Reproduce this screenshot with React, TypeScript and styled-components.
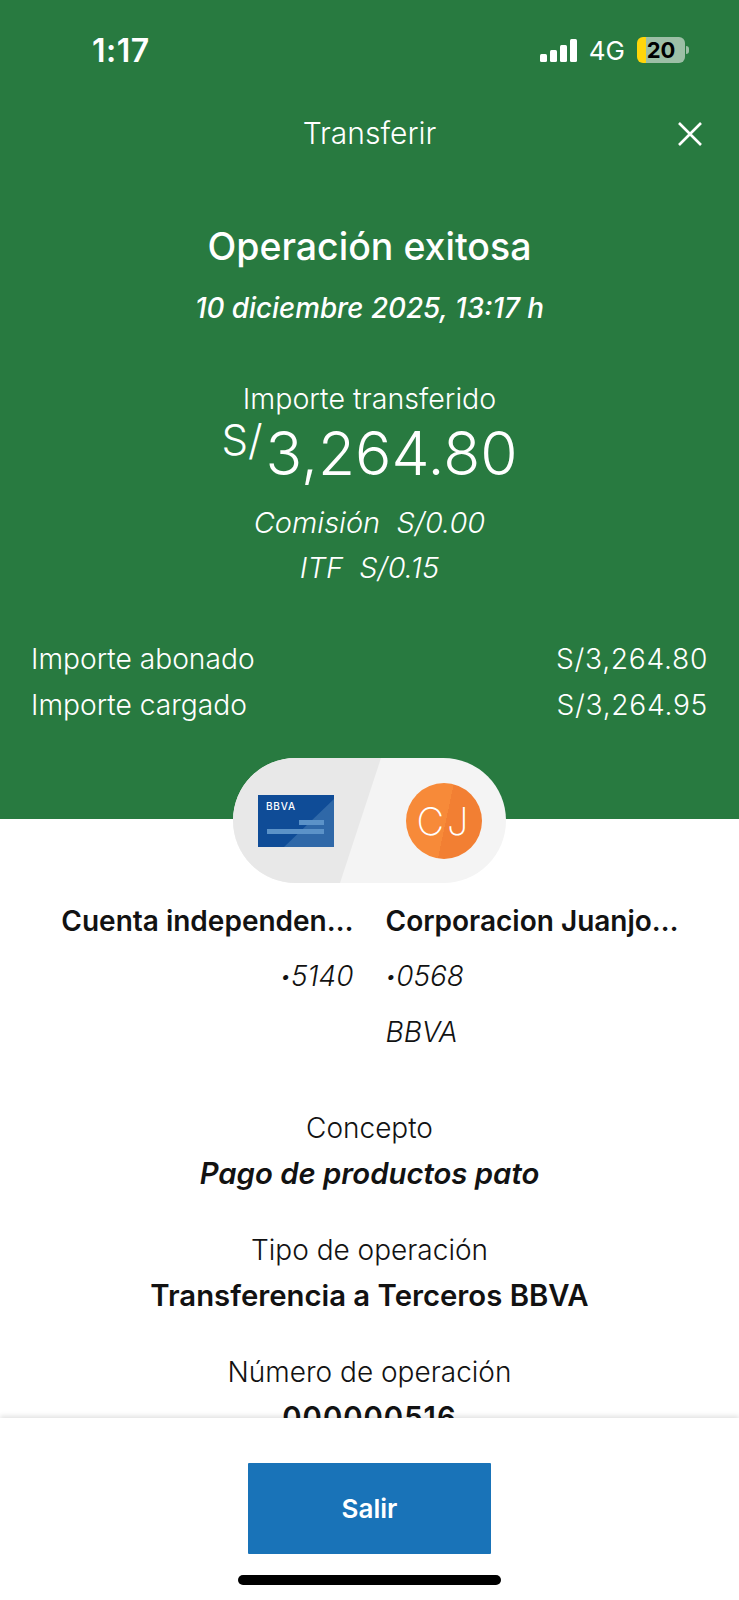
import styled, { createGlobalStyle } from "styled-components";

const GlobalStyle = createGlobalStyle`
  html, body {
    margin: 0;
    padding: 0;
    background: #fff;
  }
  * {
    box-sizing: border-box;
  }
`;

const SIGNAL_BARS = [8, 12, 17, 23];

const App = () => {
  return (
    <Screen>
      <GlobalStyle />
      <Scroller>
        <Hero>
          <StatusBar>
            <Clock>1:17</Clock>
            <StatusIcons>
              <Signal>
                {SIGNAL_BARS.map((h) => (
                  <SignalBar key={h} style={{ height: h }} />
                ))}
              </Signal>
              <Network>4G</Network>
              <Battery>
                <BatteryLevel>20</BatteryLevel>
                <BatteryTip />
              </Battery>
            </StatusIcons>
          </StatusBar>

          <NavBar>
            <NavTitle>Transferir</NavTitle>
            <CloseButton>
              <svg width="26" height="26" viewBox="0 0 26 26" fill="none">
                <path d="M2 2L24 24M24 2L2 24" stroke="#fff" strokeWidth="2.6" />
              </svg>
            </CloseButton>
          </NavBar>

          <Heading>Operación exitosa</Heading>
          <DateLine>10 diciembre 2025, 13:17 h</DateLine>

          <AmountLabel>Importe transferido</AmountLabel>
          <Amount>
            <Currency>S/</Currency>3,264.80
          </Amount>
          <Fee>Comisión&nbsp; S/0.00</Fee>
          <Fee $second>ITF&nbsp; S/0.15</Fee>

          <Totals>
            <TotalRow>
              <span>Importe abonado</span>
              <TotalValue>S/3,264.80</TotalValue>
            </TotalRow>
            <TotalRow>
              <span>Importe cargado</span>
              <TotalValue>S/3,264.95</TotalValue>
            </TotalRow>
          </Totals>
        </Hero>

        <Pill>
          <PillSide>
            <svg width="76" height="52" viewBox="0 0 76 52">
              <rect width="76" height="52" fill="#0f4c97" />
              <path d="M26 52L76 4V52Z" fill="#2f68a8" />
              <rect x="41" y="25" width="25" height="5" fill="#5b92c8" />
              <rect x="9" y="34" width="57" height="5" fill="#5b92c8" />
              <text x="8" y="15" fill="#fff" fontSize="10" fontWeight="500" fontFamily="Inter, sans-serif" letterSpacing="0.8">
                BBVA
              </text>
            </svg>
          </PillSide>
          <PillSide>
            <Avatar>CJ</Avatar>
          </PillSide>
        </Pill>

        <Accounts>
          <Account $align="right">
            <AccountName>Cuenta independen…</AccountName>
            <AccountLine>
              <Bullet>•</Bullet>5140
            </AccountLine>
          </Account>
          <Account $align="left">
            <AccountName>Corporacion Juanjo…</AccountName>
            <AccountLine>
              <Bullet>•</Bullet>0568
            </AccountLine>
            <AccountLine>BBVA</AccountLine>
          </Account>
        </Accounts>

        <Details>
          <DetailLabel>Concepto</DetailLabel>
          <DetailValue $italic>Pago de productos pato</DetailValue>
          <DetailLabel>Tipo de operación</DetailLabel>
          <DetailValue>Transferencia a Terceros BBVA</DetailValue>
          <DetailLabel>Número de operación</DetailLabel>
          <DetailValue $spaced>000000516</DetailValue>
        </Details>
      </Scroller>

      <Footer>
        <ExitButton>Salir</ExitButton>
        <HomeBar />
      </Footer>
    </Screen>
  );
};

export default App;

const Screen = styled.div`
  width: 739px;
  height: 1600px;
  display: flex;
  flex-direction: column;
  overflow: hidden;
  background: #fff;
  color: #121212;
  font-family: "Inter", "Liberation Sans", sans-serif;
  font-weight: 300;
`;

const Scroller = styled.div`
  flex: 1;
  min-height: 0;
  overflow: hidden;
`;

const Hero = styled.div`
  height: 819px;
  background: #287a40;
  color: #fff;
  padding-top: 30px;
  text-align: center;
`;

const StatusBar = styled.div`
  height: 40px;
  padding: 0 50px 0 92px;
  display: flex;
  align-items: center;
  justify-content: space-between;
`;

const Clock = styled.div`
  font-size: 32px;
  font-weight: 600;
  letter-spacing: 0.5px;
`;

const StatusIcons = styled.div`
  display: flex;
  align-items: center;
`;

const Signal = styled.div`
  display: flex;
  align-items: flex-end;
  gap: 3px;
  height: 23px;
`;

const SignalBar = styled.div`
  width: 7px;
  background: #fff;
  border-radius: 1.5px;
`;

const Network = styled.div`
  margin-left: 12px;
  font-size: 26px;
  font-weight: 400;
`;

const Battery = styled.div`
  display: flex;
  align-items: center;
  margin-left: 12px;
`;

const BatteryLevel = styled.div`
  width: 48px;
  height: 26px;
  border-radius: 6px;
  background: linear-gradient(90deg, #ffd60a 0 9px, #9dbfa6 9px);
  color: #000;
  font-size: 22px;
  font-weight: 700;
  line-height: 26px;
  text-align: center;
`;

const BatteryTip = styled.div`
  width: 3px;
  height: 8px;
  margin-left: 1px;
  border-radius: 0 3px 3px 0;
  background: #9dbfa6;
`;

const NavBar = styled.div`
  position: relative;
  margin-top: 43px;
  height: 40px;
  display: flex;
  align-items: center;
  justify-content: center;
`;

const NavTitle = styled.div`
  font-size: 30px;
`;

const CloseButton = styled.div`
  position: absolute;
  right: 36px;
  top: 8px;
  display: flex;
`;

const Heading = styled.h1`
  margin: 71px 0 0;
  font-size: 37.5px;
  font-weight: 500;
  line-height: 46px;
`;

const DateLine = styled.div`
  margin-top: 22px;
  font-size: 27.8px;
  font-weight: 500;
  font-style: italic;
  line-height: 32px;
`;

const AmountLabel = styled.div`
  margin-top: 58px;
  font-size: 28.6px;
  line-height: 34px;
`;

const Amount = styled.div`
  margin-top: 1px;
  font-size: 60.5px;
  line-height: 72px;
  position: relative;
`;

const Currency = styled.span`
  font-size: 42px;
  vertical-align: 20px;
  line-height: 0;
  margin-right: 3px;
`;

const Fee = styled.div<{ $second?: boolean }>`
  margin-top: ${(p) => (p.$second ? "11px" : "17px")};
  font-size: 29px;
  font-style: italic;
  line-height: 34px;
`;

const Totals = styled.div`
  margin-top: 57px;
  padding: 0 31px;
  display: flex;
  flex-direction: column;
  gap: 11px;
`;

const TotalRow = styled.div`
  display: flex;
  justify-content: space-between;
  font-size: 28.2px;
  line-height: 35px;
`;

const TotalValue = styled.span`
  letter-spacing: 0.7px;
`;

const Pill = styled.div`
  position: relative;
  width: 273px;
  height: 125px;
  margin: -61px auto 0;
  border-radius: 63px;
  overflow: hidden;
  background: #f4f4f4;
  display: flex;

  &::before {
    content: "";
    position: absolute;
    inset: 0;
    background: #e8e8e8;
    clip-path: polygon(0 0, 148px 0, 107px 100%, 0 100%);
  }
`;

const PillSide = styled.div`
  position: relative;
  flex: 1;
  display: flex;
  align-items: center;

  &:first-child {
    justify-content: flex-start;
    padding-left: 25px;
  }

  &:last-child {
    justify-content: flex-end;
    padding-right: 24px;
  }
`;

const Avatar = styled.div`
  width: 76px;
  height: 76px;
  border-radius: 50%;
  background: linear-gradient(102deg, #f78a39 0 52%, #f27f33 52%);
  color: #fff;
  display: flex;
  align-items: center;
  justify-content: center;
  font-size: 38px;
  font-weight: 200;
  letter-spacing: 3px;
`;

const Accounts = styled.div`
  margin-top: 19px;
  padding: 0 61px;
  display: grid;
  grid-template-columns: 1fr 1fr;
  column-gap: 32px;
`;

const Account = styled.div<{ $align: "left" | "right" }>`
  text-align: ${(p) => p.$align};
  min-width: 0;
`;

const AccountName = styled.div`
  font-size: 28px;
  font-weight: 600;
  line-height: 38px;
  white-space: nowrap;
`;

const AccountLine = styled.div`
  margin-top: 17px;
  font-size: 28px;
  font-style: italic;
  line-height: 38px;
`;

const Bullet = styled.span`
  font-size: 19px;
  vertical-align: 3px;
`;

const Details = styled.div`
  margin-top: 59px;
  text-align: center;
`;

const DetailLabel = styled.div`
  font-size: 28px;
  line-height: 36px;
  margin-top: 40px;

  &:first-child {
    margin-top: 0;
  }
`;

const DetailValue = styled.div<{ $italic?: boolean; $spaced?: boolean }>`
  margin-top: 10px;
  font-size: 29.3px;
  font-weight: 600;
  font-style: ${(p) => (p.$italic ? "italic" : "normal")};
  letter-spacing: ${(p) => (p.$spaced ? "1px" : "0")};
  line-height: 36px;
`;

const Footer = styled.div`
  position: relative;
  flex: none;
  height: 182px;
  background: #fff;
  box-shadow: 0 -2px 5px rgba(0, 0, 0, 0.12);
  display: flex;
  flex-direction: column;
  align-items: center;
  padding-top: 45px;
`;

const ExitButton = styled.button`
  width: 243px;
  height: 91px;
  border: none;
  border-radius: 1px;
  background: #1973b8;
  color: #fff;
  font-family: inherit;
  font-size: 26px;
  font-weight: 600;
`;

const HomeBar = styled.div`
  width: 263px;
  height: 10px;
  margin-top: 21px;
  border-radius: 5px;
  background: #000;
`;
